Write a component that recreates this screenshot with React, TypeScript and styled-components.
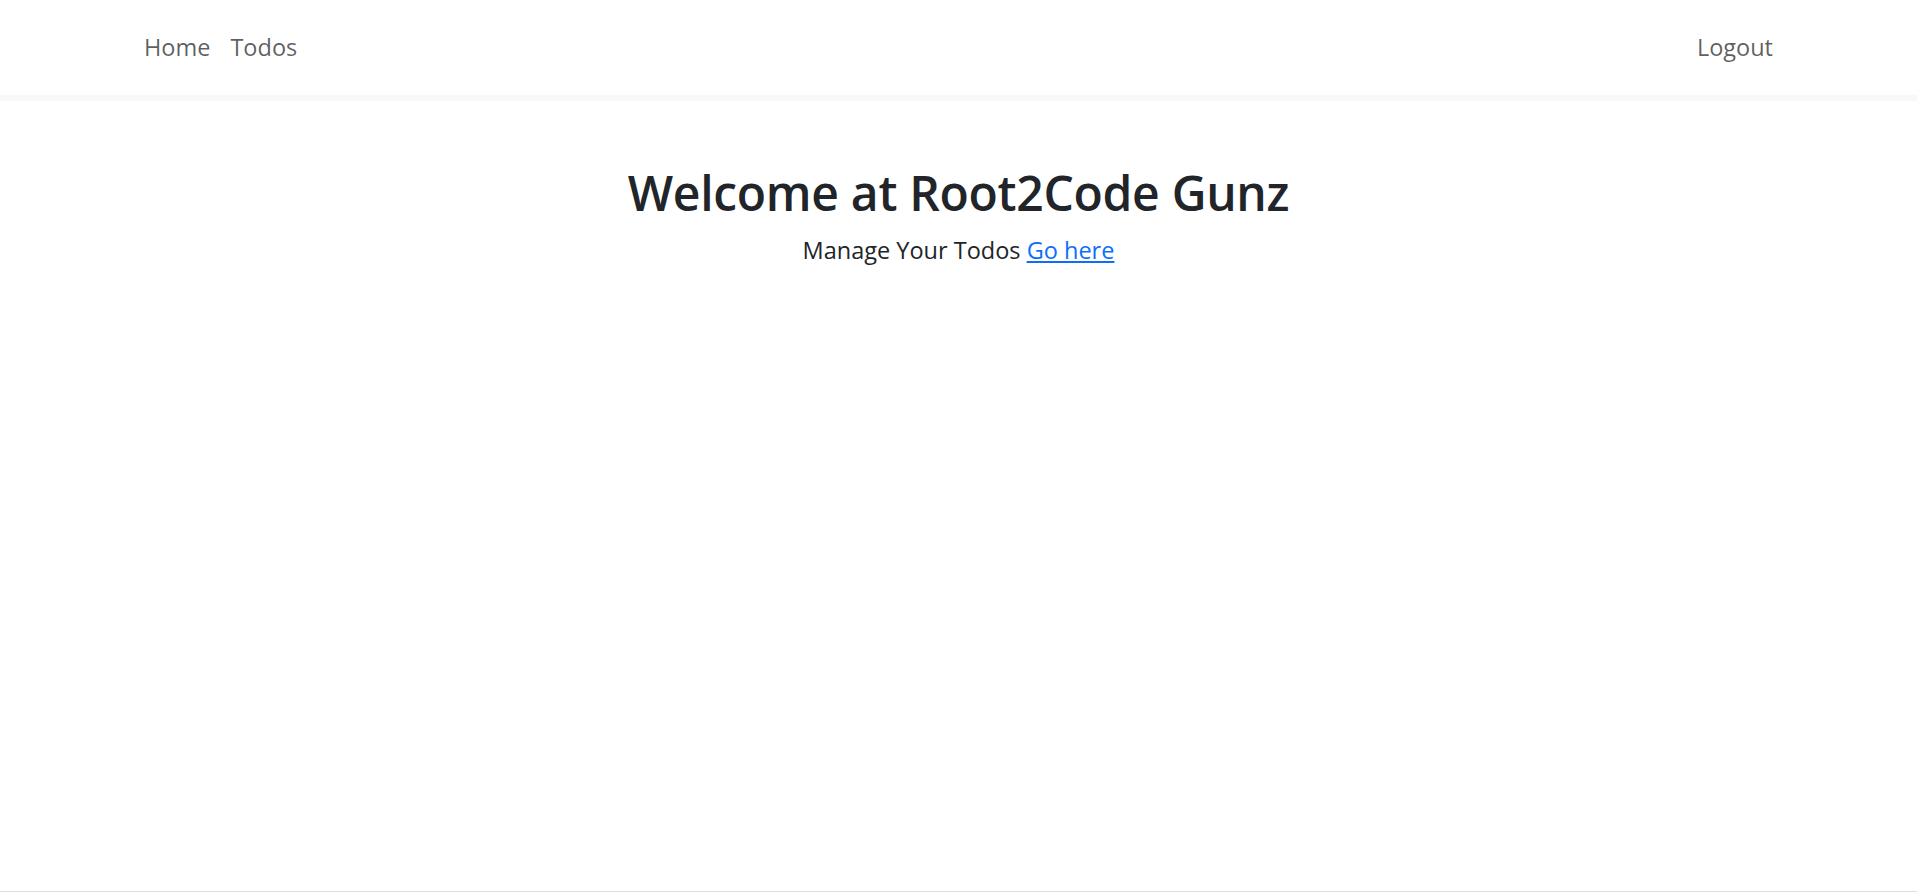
import React from "react";
import styled, { createGlobalStyle } from "styled-components";

const Global = createGlobalStyle`
  html, body { margin: 0; padding: 0; }
  body {
    background: #fff;
    font-family: "Open Sans", "Noto Sans", sans-serif;
    color: #212529;
  }
  * { box-sizing: border-box; }
`;

const Page = styled.div`
  min-height: 100vh;
  display: flex;
  flex-direction: column;
`;

const NavBar = styled.nav`
  height: 101px;
  background: #fff;
  border-bottom: 6px solid #f7f8fa;
  display: flex;
  align-items: center;
  justify-content: space-between;
  padding: 0 134px 2px;
`;

const NavGroup = styled.div`
  display: flex;
  align-items: center;
`;

const NavLink = styled.a`
  font-size: 23.5px;
  line-height: 30px;
  padding: 0 10px;
  color: rgba(0, 0, 0, 0.64);
  text-decoration: none;
  cursor: pointer;
`;

const Main = styled.main`
  flex: 1;
  display: flex;
  flex-direction: column;
  align-items: center;
  padding-top: 62px;
`;

const Title = styled.h1`
  margin: 0;
  font-size: 48px;
  font-weight: 600;
  line-height: 60px;
  color: #212529;
  letter-spacing: -0.3px;
`;

const Lead = styled.p`
  margin: 11px 0 0;
  font-size: 23.5px;
  line-height: 32px;
  color: #212529;
`;

const Link = styled.a`
  color: #0d6efd;
  text-decoration: underline;
  cursor: pointer;
`;

const BottomEdge = styled.div`
  height: 1px;
  background: #d6dfe7;
`;

export default function App() {
  return (
    <>
      <Global />
      <Page>
        <NavBar>
          <NavGroup>
            <NavLink>Home</NavLink>
            <NavLink>Todos</NavLink>
          </NavGroup>
          <NavGroup>
            <NavLink>Logout</NavLink>
          </NavGroup>
        </NavBar>
        <Main>
          <Title>Welcome at Root2Code Gunz</Title>
          <Lead>
            Manage Your Todos <Link>Go here</Link>
          </Lead>
        </Main>
        <BottomEdge />
      </Page>
    </>
  );
}
